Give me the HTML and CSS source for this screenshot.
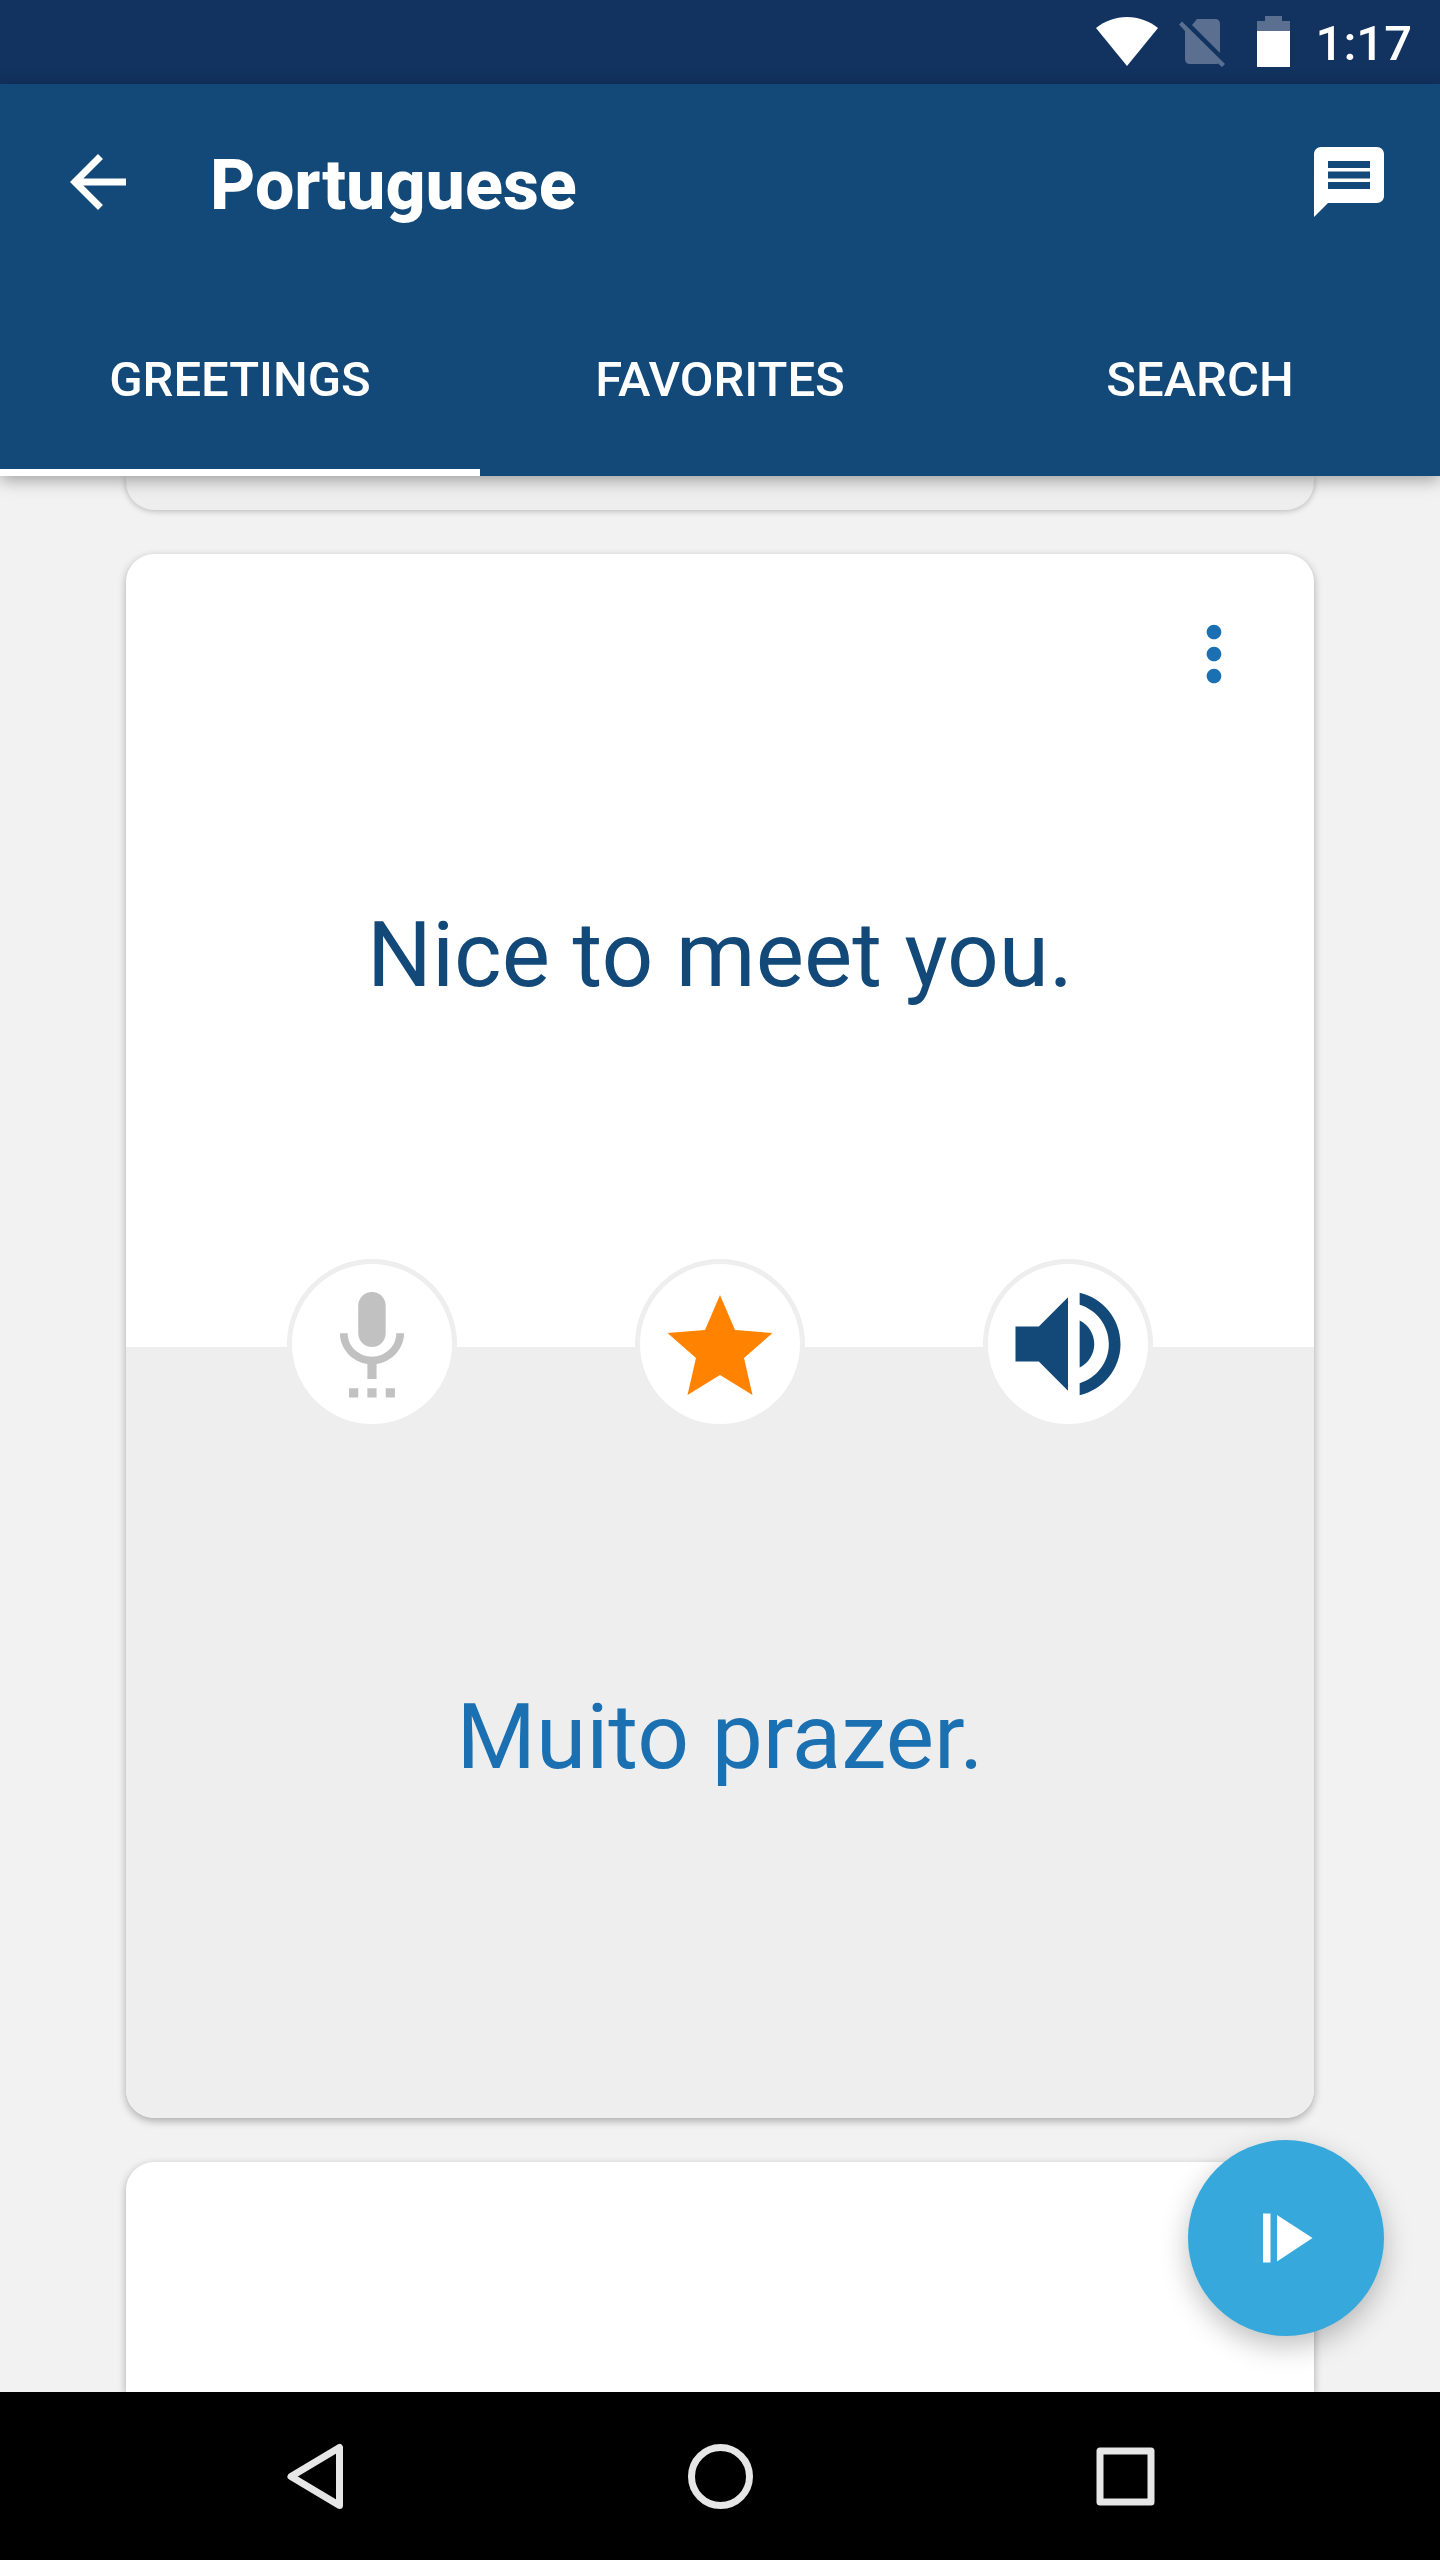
FILE: index.html
```html
<!DOCTYPE html>
<html lang="en">
<head>
  <meta charset="UTF-8">
  <meta name="viewport" content="width=device-width, initial-scale=1.0">
  <title>Portuguese</title>
  <link rel="stylesheet" href="styles.css">
</head>
<body>
  <div class="statusbar">
    <svg width="62" height="52" viewBox="0 0 62 52" fill="#fff" aria-hidden="true">
      <path d="M31 50L0 12C9 5 19 1 31 1s22 4 31 11z"/>
    </svg>
    <svg width="57" height="52" viewBox="0 0 57 52" fill="#5b7090" aria-hidden="true">
      <path d="M13 9l5-6h18q5 0 5 5v29zM3 5.500l43 42.500-3 3-4-3.500q-1 .5-3 .5H11q-5 0-5-5V15L0 8.500z"/>
    </svg>
    <svg width="38" height="52" viewBox="0 0 38 52" aria-hidden="true">
      <path fill="#5b7090" d="M8 0h17v5h8v10H0V5h8z"/>
      <path fill="#fff" d="M0 15h33v36H0z"/>
    </svg>
    <span class="time">1:17</span>
  </div>

  <header class="header">
    <div class="toolbar">
      <a class="icon" href="#" aria-label="Back">
        <svg viewBox="0 0 24 24"><path d="M20 11H7.830l5.590-5.590L12 4l-8 8 8 8 1.410-1.410L7.830 13H20v-2z"/></svg>
      </a>
      <h1>Portuguese</h1>
      <button class="icon" aria-label="Messages">
        <svg viewBox="0 0 24 24"><path d="M20 2H4c-1.100 0-1.990.9-1.990 2L2 22l4-4h14c1.100 0 2-.9 2-2V4c0-1.100-.9-2-2-2zm-2 12H6v-2h12v2zm0-3H6V9h12v2zm0-3H6V6h12v2z"/></svg>
      </button>
    </div>
    <nav class="tabs">
      <a class="active" href="#greetings">GREETINGS</a>
      <a href="#favorites">FAVORITES</a>
      <a href="#search">SEARCH</a>
    </nav>
  </header>

  <main class="list" id="greetings">
    <div class="card card-prev"></div>

    <article class="card">
      <div class="front">
        <button class="more" aria-label="More options">
          <svg viewBox="0 0 24 24"><path d="M12 8c1.100 0 2-.9 2-2s-.9-2-2-2-2 .9-2 2 .9 2 2 2zm0 2c-1.100 0-2 .9-2 2s.9 2 2 2 2-.9 2-2-.9-2-2-2zm0 6c-1.100 0-2 .9-2 2s.9 2 2 2 2-.9 2-2-.9-2-2-2z"/></svg>
        </button>
        <p>Nice to meet you.</p>
      </div>
      <div class="actions">
        <button class="mic" aria-label="Record">
          <svg viewBox="-3.270 -2.930 30.550 30.550"><path d="M7 24h2v-2H7v2zm5-11c1.660 0 2.990-1.340 2.990-3L15 4c0-1.660-1.340-3-3-3S9 2.340 9 4v6c0 1.660 1.340 3 3 3zm-1 11h2v-2h-2v2zm4 0h2v-2h-2v2zm4-14h-1.700c0 3-2.540 5.100-5.300 5.100S6.700 13 6.700 10H5c0 3.410 2.720 6.230 6 6.720V20h2v-3.280c3.280-.49 6-3.310 6-6.720z"/></svg>
        </button>
        <button class="star" aria-label="Favorite">
          <svg viewBox="0 -1 140 140"><path d="M70 20l15 35 37.500 3L94 83l8.500 37L70 100l-32.500 20L46 83 17.500 58 55 55z"/></svg>
        </button>
        <button class="sound" aria-label="Play sound">
          <svg viewBox="0 0 24 24"><path d="M3 9v6h4l5 5V4L7 9H3zm13.500 3c0-1.770-1.020-3.290-2.500-4.030v8.050c1.480-.73 2.500-2.250 2.500-4.020zM14 3.230v2.060c2.890.86 5 3.540 5 6.710s-2.110 5.850-5 6.710v2.060c4.010-.91 7-4.490 7-8.770s-2.990-7.860-7-8.770z"/></svg>
        </button>
      </div>
      <div class="back">
        <p lang="pt">Muito prazer.</p>
      </div>
    </article>

    <div class="card card-next"></div>

    <button class="fab" aria-label="Play all">
      <svg viewBox="0 0 84 84"><path d="M19 17.500h7.500v49H19zM33 19l35.500 23L33 65.500z"/></svg>
    </button>
  </main>

  <div class="navbar">
    <button aria-label="Back">
      <svg viewBox="0 0 84 84"><path d="M66.500 13.500v58L18 42.500z"/></svg>
    </button>
    <button aria-label="Home">
      <svg viewBox="0 0 84 84"><circle cx="42.500" cy="42.500" r="29"/></svg>
    </button>
    <button aria-label="Overview">
      <svg viewBox="0 0 84 84"><rect x="17" y="17" width="51" height="51"/></svg>
    </button>
  </div>
</body>
</html>
```
FILE: styles.css
```css
* {
  box-sizing: border-box;
}
body {
  margin: 0;
  min-height: 100vh;
  display: flex;
  flex-direction: column;
  font-family: Roboto, "Noto Sans", sans-serif;
  background: #f2f2f2;
}
button {
  padding: 0;
  border: 0;
  background: none;
  cursor: pointer;
}
svg {
  display: block;
}
p, h1 {
  margin: 0;
}

.statusbar {
  display: flex;
  align-items: center;
  justify-content: flex-end;
  gap: 21px;
  height: 84px;
  padding-right: 28px;
  background: #12325f;
}
.time {
  padding-top: 3px;
  color: #fff;
  font-size: 49px;
  font-weight: 500;
}

.header {
  position: relative;
  z-index: 2;
  background: #134978;
  color: #fff;
  box-shadow: 0 4px 16px rgba(0,0,0,0.35);
}
.toolbar {
  display: flex;
  align-items: center;
  height: 196px;
  padding: 0 49px 0 56px;
}
.toolbar h1 {
  flex: 1;
  margin-left: 70px;
  padding-top: 6px;
  font-size: 70px;
  font-weight: 800;
}
.icon svg {
  width: 84px;
  height: 84px;
  fill: #fff;
}
.tabs {
  display: grid;
  grid-template-columns: repeat(3, 1fr);
}
.tabs a {
  height: 196px;
  padding-top: 10px;
  border-bottom: 7px solid transparent;
  display: flex;
  align-items: center;
  justify-content: center;
  color: #fff;
  font-size: 49px;
  font-weight: 500;
  text-decoration: none;
}
.tabs .active {
  border-bottom-color: #fff;
}

.list {
  position: relative;
  flex: 1;
  display: flex;
  flex-direction: column;
  gap: 44px;
  padding: 0 126px;
  overflow: hidden;
}
.card {
  border-radius: 28px;
  background: #fff;
  box-shadow: 0 3px 8px rgba(0,0,0,0.3);
}
.card-prev {
  height: 34px;
  background: #eee;
  border-top-left-radius: 0;
  border-top-right-radius: 0;
  box-shadow: 0 1px 6px rgba(0,0,0,0.25);
}
.card-next {
  flex: 1;
  min-height: 230px;
  border-bottom-left-radius: 0;
  border-bottom-right-radius: 0;
}
.front, .back {
  display: flex;
  align-items: center;
  justify-content: center;
  padding-top: 8px;
  font-size: 91px;
}
.front {
  position: relative;
  min-height: 793px;
  color: #134978;
}
.back {
  min-height: 771px;
  border-radius: 0 0 28px 28px;
  background: #eee;
  color: #1b70b2;
}
.more {
  position: absolute;
  top: 56px;
  right: 56px;
}
.more svg {
  width: 88px;
  height: 88px;
  fill: #1b70b2;
}

/* the row straddles the seam between the two halves */
.actions {
  position: relative;
  display: flex;
  justify-content: center;
  gap: 178px;
  margin: -88px 0 -82px;
}
.actions button {
  width: 170px;
  height: 170px;
  border: 5px solid #eee;
  border-radius: 50%;
  background: #fff;
}
.actions svg {
  width: 140px;
  height: 140px;
  margin: 0 auto;
}
.mic {
  fill: #c1c1c1;
}
.star {
  fill: #ff8200;
}
.sound {
  fill: #134978;
}

.fab {
  position: absolute;
  right: 56px;
  bottom: 56px;
  width: 196px;
  height: 196px;
  border-radius: 50%;
  background: #37a8db;
  box-shadow: 0 10px 28px rgba(0,0,0,0.25);
}
.fab svg {
  width: 84px;
  height: 84px;
  margin: 0 auto;
  fill: #fff;
}

.navbar {
  position: relative;
  display: grid;
  grid-template-columns: repeat(3, 1fr);
  height: 168px;
  padding: 0 112px;
  background: #000;
}
.navbar svg {
  width: 84px;
  height: 84px;
  margin: 0 auto;
  fill: none;
  stroke: #e6e6e6;
  stroke-width: 7;
  stroke-linejoin: round;
}
```
